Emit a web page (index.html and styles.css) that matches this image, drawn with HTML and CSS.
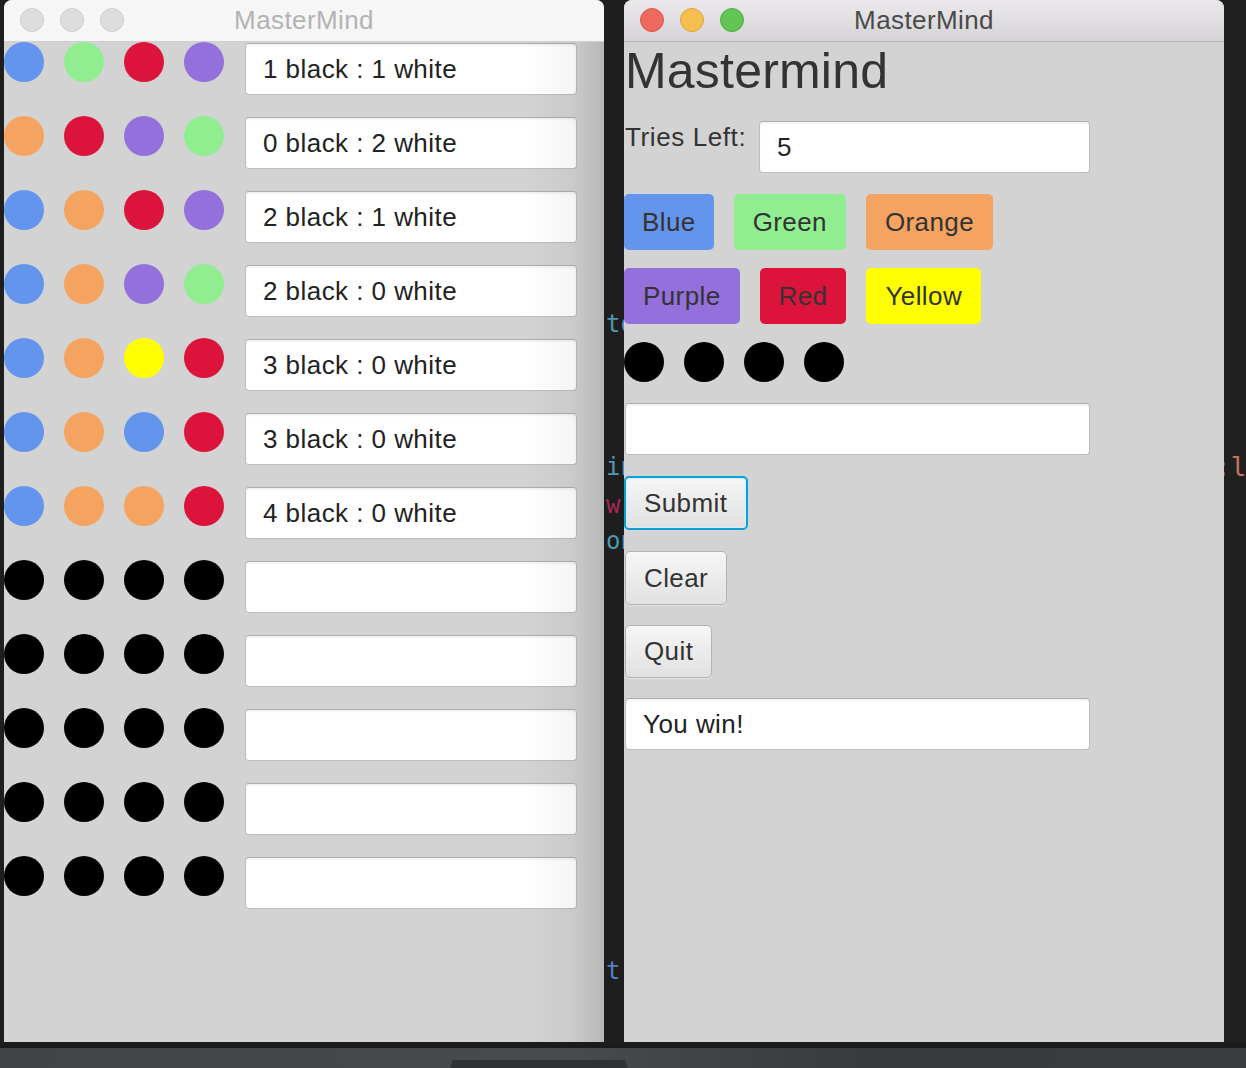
FILE: index.html
```html
<!DOCTYPE html>
<html>
<head>
<meta charset="utf-8">
<title>MasterMind</title>
<link rel="stylesheet" href="styles.css">
</head>
<body>
<div class="screen">
  <div class="desk">
    <div class="edge"></div>

    <section class="win win-inactive">
      <header class="titlebar">
        <div class="lights"><span></span><span></span><span></span></div>
        <div class="title">MasterMind</div>
        <div></div>
      </header>
      <div class="board">
        <div class="row"><div class="pegs"><i class="peg blue"></i><i class="peg green"></i><i class="peg red"></i><i class="peg purple"></i></div><div class="field board-field">1 black : 1 white</div></div>
        <div class="row"><div class="pegs"><i class="peg orange"></i><i class="peg red"></i><i class="peg purple"></i><i class="peg green"></i></div><div class="field board-field">0 black : 2 white</div></div>
        <div class="row"><div class="pegs"><i class="peg blue"></i><i class="peg orange"></i><i class="peg red"></i><i class="peg purple"></i></div><div class="field board-field">2 black : 1 white</div></div>
        <div class="row"><div class="pegs"><i class="peg blue"></i><i class="peg orange"></i><i class="peg purple"></i><i class="peg green"></i></div><div class="field board-field">2 black : 0 white</div></div>
        <div class="row"><div class="pegs"><i class="peg blue"></i><i class="peg orange"></i><i class="peg yellow"></i><i class="peg red"></i></div><div class="field board-field">3 black : 0 white</div></div>
        <div class="row"><div class="pegs"><i class="peg blue"></i><i class="peg orange"></i><i class="peg blue"></i><i class="peg red"></i></div><div class="field board-field">3 black : 0 white</div></div>
        <div class="row"><div class="pegs"><i class="peg blue"></i><i class="peg orange"></i><i class="peg orange"></i><i class="peg red"></i></div><div class="field board-field">4 black : 0 white</div></div>
        <div class="row"><div class="pegs"><i class="peg"></i><i class="peg"></i><i class="peg"></i><i class="peg"></i></div><div class="field board-field"></div></div>
        <div class="row"><div class="pegs"><i class="peg"></i><i class="peg"></i><i class="peg"></i><i class="peg"></i></div><div class="field board-field"></div></div>
        <div class="row"><div class="pegs"><i class="peg"></i><i class="peg"></i><i class="peg"></i><i class="peg"></i></div><div class="field board-field"></div></div>
        <div class="row"><div class="pegs"><i class="peg"></i><i class="peg"></i><i class="peg"></i><i class="peg"></i></div><div class="field board-field"></div></div>
        <div class="row"><div class="pegs"><i class="peg"></i><i class="peg"></i><i class="peg"></i><i class="peg"></i></div><div class="field board-field"></div></div>
      </div>
    </section>

    <div class="gutter">
      <span class="code c1 teal">to</span>
      <span class="code c2 teal">in</span>
      <span class="code c3 crimson">w</span>
      <span class="code c4 teal">on</span>
      <span class="code c5 blue-code">t(</span>
    </div>

    <section class="win win-active">
      <header class="titlebar">
        <div class="lights"><span class="l-red"></span><span class="l-yellow"></span><span class="l-green"></span></div>
        <div class="title">MasterMind</div>
        <div></div>
      </header>
      <div class="panel">
        <h1 class="heading">Mastermind</h1>
        <div class="tries">
          <span class="tries-label">Tries Left:</span>
          <div class="field tries-field">5</div>
        </div>
        <div class="colors">
          <div class="color-row">
            <button class="cbtn blue">Blue</button>
            <button class="cbtn green">Green</button>
            <button class="cbtn orange">Orange</button>
          </div>
          <div class="color-row">
            <button class="cbtn purple">Purple</button>
            <button class="cbtn red">Red</button>
            <button class="cbtn yellow">Yellow</button>
          </div>
        </div>
        <div class="pegs guess"><i class="peg"></i><i class="peg"></i><i class="peg"></i><i class="peg"></i></div>
        <div class="field wide-field guess-field"></div>
        <button class="btn focused submit">Submit</button>
        <button class="btn clear">Clear</button>
        <button class="btn quit">Quit</button>
        <div class="field wide-field result">You win!</div>
      </div>
    </section>

    <div class="gutter gutter-right">
      <span class="code c2 salmon">:l</span>
    </div>
  </div>
  <div class="dock"><div class="dock-tab"></div></div>
</div>
</body>
</html>
```

FILE: styles.css
```css
* { box-sizing: border-box; }

html, body {
  margin: 0;
  padding: 0;
  background: #1e1e1e;
}

body {
  font-family: "Liberation Sans", Arial, sans-serif;
  color: #333;
  width: 1246px;
  height: 1068px;
  overflow: hidden;
}

.screen {
  display: flex;
  flex-direction: column;
  width: 1246px;
  height: 1068px;
}

.desk {
  display: flex;
  height: 1042px;
  flex: none;
}

.edge {
  width: 4px;
  flex: none;
  background: #1e1e1e;
}

.win {
  width: 600px;
  flex: none;
  display: flex;
  flex-direction: column;
  background: #d3d3d3;
  border-radius: 8px 8px 0 0;
  overflow: hidden;
}

.titlebar {
  height: 42px;
  flex: none;
  display: grid;
  grid-template-columns: 1fr auto 1fr;
  align-items: center;
  border-bottom: 1px solid #c4c4c4;
  padding-bottom: 1px;
}

.win-inactive .titlebar {
  background: #f6f6f6;
  border-bottom-color: #cfcfcf;
}

.win-active .titlebar {
  background: linear-gradient(#ebe9eb, #d5d3d5);
  border-bottom-color: #b3b3b3;
}

.lights {
  display: flex;
  gap: 16px;
  padding-left: 16px;
}

.lights span {
  width: 24px;
  height: 24px;
  border-radius: 50%;
  background: #dcdcdc;
  border: 1px solid #cdcdcd;
}

.lights .l-red { background: #ee6a5f; border-color: #d9574c; }
.lights .l-yellow { background: #f5be4f; border-color: #dca43a; }
.lights .l-green { background: #62c554; border-color: #4fae43; }

.title {
  font-size: 26px;
  letter-spacing: 0.4px;
  line-height: 32px;
}

.win-inactive .title { color: #b3b3b3; }
.win-active .title { color: #4a4a4a; }

/* Left window board */
.board {
  position: relative;
  flex: 1;
  display: flex;
  flex-direction: column;
  gap: 22px;
}

.board::after {
  content: "";
  position: absolute;
  top: 0;
  right: 0;
  bottom: 0;
  width: 80px;
  background: linear-gradient(to right, rgba(0,0,0,0), rgba(0,0,0,0.04) 60%, rgba(0,0,0,0.13));
  pointer-events: none;
}

.row {
  display: flex;
  align-items: flex-start;
  height: 52px;
}

.pegs {
  display: flex;
  gap: 20px;
  flex: none;
}

.peg {
  display: block;
  width: 40px;
  height: 40px;
  border-radius: 50%;
  background: #000;
}

.blue { background: #6495ed; }
.green { background: #90ee90; }
.red { background: #dc143c; }
.purple { background: #9370db; }
.orange { background: #f4a460; }
.yellow { background: #ffff00; }

.field {
  height: 52px;
  background: #fff;
  border: 1px solid #bdbdbd;
  border-top-color: #adadad;
  border-radius: 4px;
  box-shadow: inset 0 2px 2px rgba(0,0,0,0.05);
  font-size: 26px;
  letter-spacing: 0.45px;
  line-height: 50px;
  padding-left: 17px;
  color: #222;
}

.board-field {
  width: 332px;
  margin-top: 1px;
  margin-left: 21px;
}

/* Right window panel */
.panel {
  flex: 1;
  display: flex;
  flex-direction: column;
  align-items: flex-start;
}

.heading {
  margin: 0;
  font-weight: normal;
  font-size: 50px;
  line-height: 59px;
  height: 59px;
  color: #333;
  padding-left: 1px;
  letter-spacing: 0.2px;
}

.tries {
  margin-top: 20px;
  display: flex;
  align-items: flex-start;
  height: 52px;
}

.tries-label {
  width: 135px;
  font-size: 26px;
  letter-spacing: 0.6px;
  line-height: 32px;
  padding-left: 1px;
  color: #333;
}

.tries-field {
  width: 331px;
}

.colors {
  margin-top: 21px;
  display: flex;
  flex-direction: column;
  gap: 18px;
}

.color-row {
  display: flex;
  gap: 20px;
}

.cbtn {
  height: 56px;
  border: none;
  border-radius: 5px;
  padding: 0 19px;
  font-family: inherit;
  font-size: 26px;
  letter-spacing: 0.4px;
  color: #333;
}

.cbtn.blue { padding: 0 18px; }

.guess {
  margin-top: 18px;
}

.wide-field {
  width: 465px;
  margin-left: 1px;
}

.guess-field { margin-top: 21px; }

.btn {
  height: 54px;
  padding: 0 18px;
  margin-left: 1px;
  font-family: inherit;
  font-size: 26px;
  letter-spacing: 0.4px;
  color: #333;
  background: linear-gradient(#f6f6f6, #e1e1e1);
  border: 1px solid #b3b3b3;
  border-radius: 5px;
  box-shadow: 0 1px 0 rgba(255,255,255,0.4);
}

.btn.focused {
  margin-left: 0;
  padding: 0 19px 0 18px;
  border: 2px solid #0aa0d8;
  box-shadow: inset 0 0 0 1px #d6eef8;
}

.submit { margin-top: 21px; }
.clear { margin-top: 21px; }
.quit { margin-top: 20px; height: 53px; }
.result { margin-top: 20px; }

/* editor fragments behind windows */
.gutter {
  width: 20px;
  flex: none;
  overflow: hidden;
  display: flex;
  flex-direction: column;
  padding-left: 2px;
  background: #1e1e1e;
  font-family: "DejaVu Sans Mono", monospace;
  font-size: 24px;
}

.gutter-right {
  width: 22px;
  padding-left: 0;
  background: #202020;
}

.code {
  display: block;
  height: 36px;
  line-height: 36px;
  white-space: nowrap;
}

.gutter-right .code {
  text-indent: -9px;
  font-size: 26px;
}

.c1 { margin-top: 306px; }
.c2 { margin-top: 107px; }
.c3 { margin-top: 2px; }
.c4 { margin-top: 0; }
.c5 { margin-top: 394px; }
.gutter-right .c2 { margin-top: 449px; }

.teal { color: #4f97b3; }
.crimson { color: #a62a55; }
.blue-code { color: #5580c8; }
.salmon { color: #c07461; }

/* dock */
.dock {
  flex: 1;
  border-top: 6px solid #1b1b1b;
  background: linear-gradient(to right, #404446 0%, #474b4d 45%, #383b3d 70%, #3a3d3f 100%);
  display: flex;
  align-items: flex-end;
  padding-left: 450px;
}

.dock-tab {
  width: 178px;
  height: 8px;
  background: #2f3234;
  clip-path: polygon(3px 0, 175px 0, 178px 100%, 0 100%);
}
```
